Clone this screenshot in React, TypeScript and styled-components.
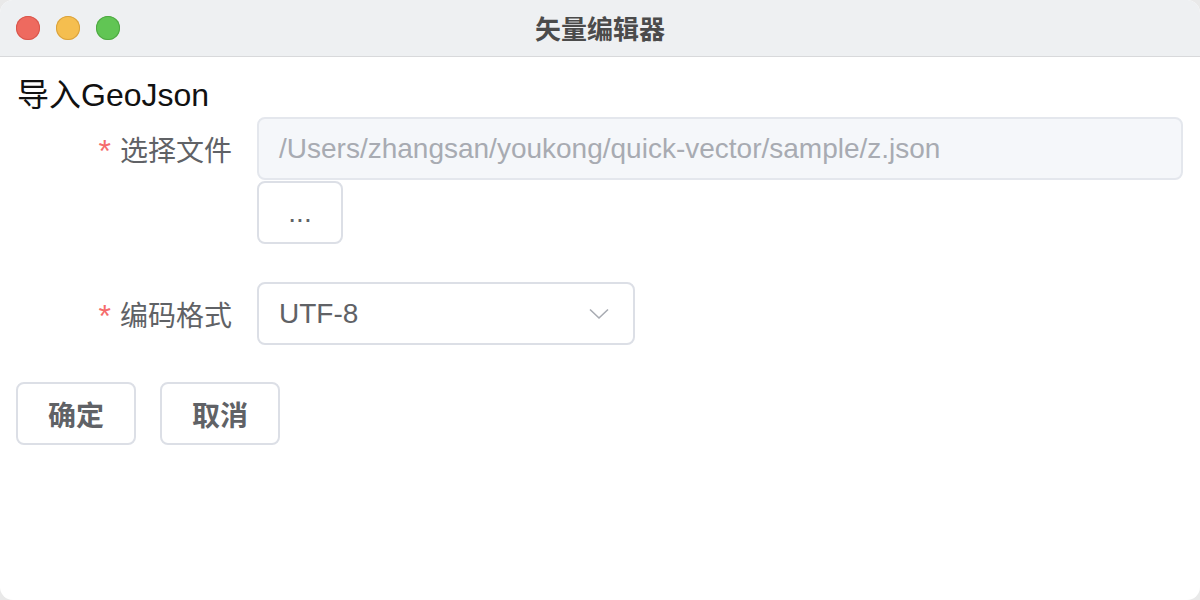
import React from "react";
import styled, { createGlobalStyle } from "styled-components";

const Global = createGlobalStyle`
  html, body { margin: 0; padding: 0; background: #e9e9e9; }
  body { font-family: "Liberation Sans", "Noto Sans CJK SC", sans-serif; }
  #root { width: 1200px; height: 600px; }
  * { box-sizing: border-box; }
`;

const Window = styled.div`
  width: 1200px;
  height: 600px;
  background: #ffffff;
  border-radius: 13px;
  overflow: hidden;
  display: flex;
  flex-direction: column;
`;

const TitleBar = styled.div`
  position: relative;
  height: 57px;
  flex: none;
  background: #eef0f2;
  border-bottom: 1px solid #d8d9db;
  display: flex;
  align-items: center;
  justify-content: center;
`;

const Lights = styled.div`
  position: absolute;
  left: 16px;
  top: 16px;
  display: flex;
  gap: 16px;
`;

const Light = styled.span<{ $c: string; $b: string }>`
  width: 24px;
  height: 24px;
  border-radius: 50%;
  background: ${(p) => p.$c};
  box-shadow: inset 0 0 0 1px ${(p) => p.$b};
`;

const Title = styled.div`
  font-family: "Noto Sans CJK SC", sans-serif;
  font-size: 26px;
  font-weight: 600;
  color: #4b4b4b;
  margin-top: -1px;
`;

const Content = styled.div`
  padding: 20px 17px 0 17px;
  display: flex;
  flex-direction: column;
`;

const Heading = styled.div`
  font-size: 32px;
  line-height: 36px;
  color: #111111;
  margin-bottom: 4px;
`;

const FormItem = styled.div<{ $mb: number }>`
  display: grid;
  grid-template-columns: 240px 1fr;
  margin-bottom: ${(p) => p.$mb}px;
`;

const Label = styled.div`
  height: 63px;
  display: flex;
  align-items: center;
  justify-content: flex-end;
  padding-right: 25px;
  font-size: 28px;
  color: #606266;
  font-family: "Noto Sans CJK SC", sans-serif;
`;

const Star = styled.span`
  color: #f56c6c;
  font-family: "Liberation Sans", sans-serif;
  font-size: 32px;
  margin-right: 9px;
  position: relative;
  top: 3px;
`;

const Field = styled.div`
  display: flex;
  flex-direction: column;
  align-items: flex-start;
  gap: 1px;
`;

const Input = styled.div`
  width: 926px;
  height: 63px;
  border: 2px solid #e4e7ed;
  border-radius: 8px;
  background: #f5f7fa;
  display: flex;
  align-items: center;
  padding: 0 20px;
  font-size: 28px;
  color: #a8abb2;
`;

const Button = styled.button<{ $w: number; $bold?: boolean }>`
  width: ${(p) => p.$w}px;
  height: 63px;
  border: 2px solid #dcdfe6;
  border-radius: 8px;
  background: #ffffff;
  color: #606266;
  font-family: "Liberation Sans", "Noto Sans CJK SC", sans-serif;
  font-size: 28px;
  font-weight: ${(p) => (p.$bold ? 600 : 400)};
  display: flex;
  align-items: center;
  justify-content: center;
  padding: 0;
  cursor: pointer;
`;

const Select = styled.div`
  width: 378px;
  height: 63px;
  border: 2px solid #dcdfe6;
  border-radius: 8px;
  background: #ffffff;
  display: flex;
  align-items: center;
  justify-content: space-between;
  padding: 0 24px 0 20px;
  font-size: 28px;
  color: #606266;
`;

const Actions = styled.div`
  display: flex;
  gap: 24px;
  margin-left: -1px;
`;

export default function App() {
  return (
    <>
      <Global />
      <Window>
        <TitleBar>
          <Lights>
            <Light $c="#ee6a5f" $b="#d8574d" />
            <Light $c="#f5be4f" $b="#d9a23e" />
            <Light $c="#61c554" $b="#4fa843" />
          </Lights>
          <Title>矢量编辑器</Title>
        </TitleBar>
        <Content>
          <Heading>导入GeoJson</Heading>
          <FormItem $mb={38}>
            <Label>
              <Star>*</Star>选择文件
            </Label>
            <Field>
              <Input>/Users/zhangsan/youkong/quick-vector/sample/z.json</Input>
              <Button $w={86}>...</Button>
            </Field>
          </FormItem>
          <FormItem $mb={37}>
            <Label>
              <Star>*</Star>编码格式
            </Label>
            <Field>
              <Select>
                <span>UTF-8</span>
                <svg width="20" height="12" viewBox="0 0 20 12" fill="none">
                  <path d="M1 1.5 L10 10 L19 1.5" stroke="#a8abb2" strokeWidth="1.6" />
                </svg>
              </Select>
            </Field>
          </FormItem>
          <Actions>
            <Button $w={120} $bold>确定</Button>
            <Button $w={120} $bold>取消</Button>
          </Actions>
        </Content>
      </Window>
    </>
  );
}
